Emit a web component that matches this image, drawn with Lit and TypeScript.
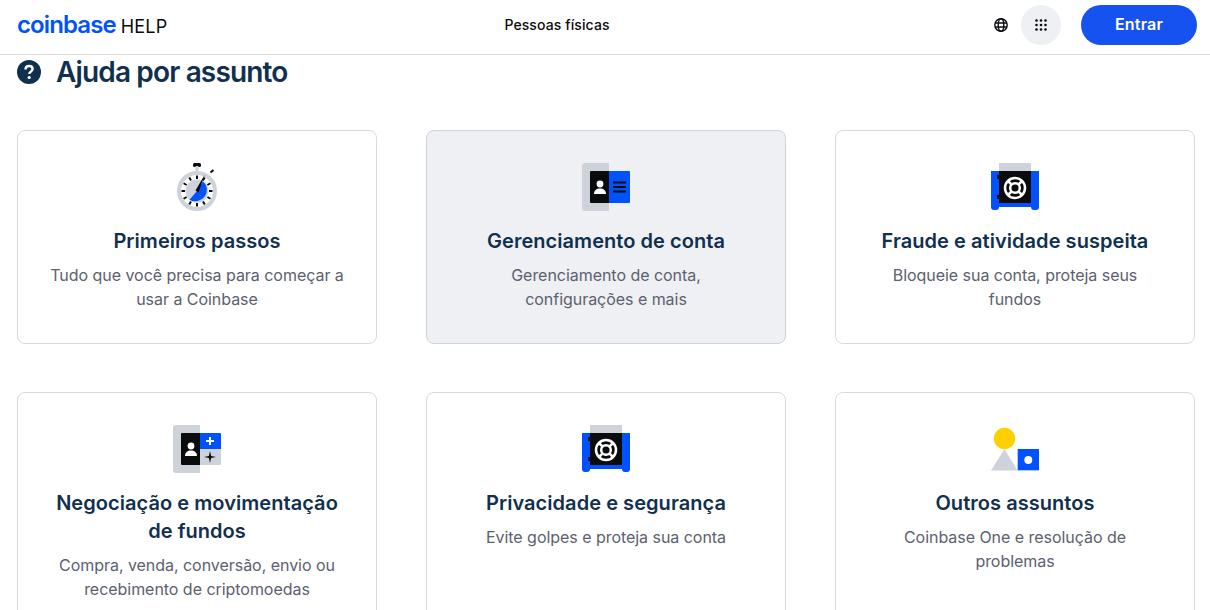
import { LitElement, html, css, svg } from "lit";
import { customElement } from "lit/decorators.js";

const idBase = svg`
  <path d="M3 0h24v48H3a3 3 0 0 1-3-3V3a3 3 0 0 1 3-3z" fill="#ced2db"/>
  <path d="M9 8h18v32H9a1 1 0 0 1-1-1V9a1 1 0 0 1 1-1z" fill="#0a0b0d"/>
  <circle cx="18" cy="21" r="3.4" fill="#fff"/>
  <path d="M12 31c0-3.5 2.6-5.4 6-5.4s6 1.900 6 5.400z" fill="#fff"/>`;

const ticks = Array.from({ length: 12 }, (_, i) => i * 30);

const icons = {
  stopwatch: svg`
    <rect x="20" y="0" width="8" height="4" rx="1.500" fill="#0a0b0d"/>
    <rect x="22.500" y="3" width="3" height="5" fill="#ced2db"/>
    <path d="M37.500 9.500l3 -2.500" stroke="#0a0b0d" stroke-width="2"/>
    <circle cx="24" cy="28" r="18" fill="#fff" stroke="#ced2db" stroke-width="4"/>
    <circle cx="24" cy="28" r="11.500" fill="#ced2db"/>
    <path d="M24 28L30 18.200A11.500 11.500 0 0 1 16.500 36.700z" fill="#0052ff"/>
    ${ticks.map(
      (a) => svg`<rect x="23" y="12.500" width="2" height="3.500" fill="#0a0b0d" transform="rotate(${a} 24 28)"/>`
    )}
    <path d="M22.500 27.500L31.800 11.500L25.500 29.500z" fill="#0a0b0d"/>`,
  account: svg`
    ${idBase}
    <path d="M27 8h20a1 1 0 0 1 1 1v30a1 1 0 0 1-1 1H27z" fill="#0052ff"/>
    <path d="M31 19.500h13M31 24h13M31 28.500h13" stroke="#0a0b0d" stroke-width="2"/>`,
  trade: svg`
    ${idBase}
    <path d="M27 8h20a1 1 0 0 1 1 1v15H27z" fill="#0052ff"/>
    <path d="M27 24h21v15a1 1 0 0 1-1 1H27z" fill="#ced2db"/>
    <path d="M33 16h8M37 12v8" stroke="#fff" stroke-width="2"/>
    <path d="M37 26l1.100 4.900 4.900 1.100-4.900 1.100-1.100 4.900-1.100-4.900-4.900-1.100 4.900-1.100z" fill="#0a0b0d"/>`,
  buoy: svg`
    <rect x="8" y="0" width="32" height="8" fill="#ced2db"/>
    <path d="M0 8h48v36a3 3 0 0 1-3 3h-2a3 3 0 0 1-3-3H8a3 3 0 0 1-3 3H3a3 3 0 0 1-3-3z" fill="#0052ff"/>
    <rect x="8" y="8" width="32" height="32" fill="#0a0b0d"/>
    <rect x="6" y="12" width="2" height="4" fill="#0a0b0d"/>
    <rect x="6" y="32" width="2" height="4" fill="#0a0b0d"/>
    <circle cx="24" cy="25" r="10" fill="none" stroke="#fff" stroke-width="2.500"/>
    <circle cx="24" cy="25" r="4.800" fill="none" stroke="#fff" stroke-width="2.500"/>
    <path d="M17 18l3.600 3.600M31 18l-3.600 3.600M17 32l3.600-3.600M31 32l-3.600-3.600" stroke="#fff" stroke-width="2.500"/>`,
  shapes: svg`
    <path d="M13.500 24L26.500 45.500H0z" fill="#ced2db"/>
    <circle cx="13.500" cy="13.500" r="10.700" fill="#ffd000"/>
    <rect x="26.700" y="24" width="21.300" height="21.300" fill="#0052ff"/>
    <circle cx="37.300" cy="35" r="4" fill="#fff"/>`,
};

const topics = [
  { icon: "stopwatch", title: "Primeiros passos", text: "Tudo que você precisa para começar a usar a Coinbase" },
  { icon: "account", title: "Gerenciamento de conta", text: "Gerenciamento de conta, configurações e mais", active: true },
  { icon: "buoy", title: "Fraude e atividade suspeita", text: "Bloqueie sua conta, proteja seus fundos" },
  { icon: "trade", title: "Negociação e movimentação de fundos", text: "Compra, venda, conversão, envio ou recebimento de criptomoedas" },
  { icon: "buoy", title: "Privacidade e segurança", text: "Evite golpes e proteja sua conta" },
  { icon: "shapes", title: "Outros assuntos", text: "Coinbase One e resolução de problemas" },
] as const;

@customElement("app-root")
export class AppRoot extends LitElement {
  static styles = css`
    :host {
      display: block;
      height: 610px;
      overflow: hidden;
      background: #fff;
      font-family: Inter, "Noto Sans", sans-serif;
    }
    .top {
      display: flex;
      align-items: center;
      height: 50px;
      padding: 0 13px 4px 17px;
      border-bottom: 1px solid #dcdcdc;
    }
    .brand {
      display: flex;
      align-items: baseline;
      gap: 5px;
      width: 400px;
      margin-top: -2px;
    }
    .logo {
      color: #0052ff;
      font-size: 24px;
      font-weight: 600;
      letter-spacing: -0.9px;
    }
    .help {
      color: #0a0b0d;
      font-size: 18px;
      letter-spacing: 0.2px;
    }
    .segment {
      width: 280px;
      margin-top: -2px;
      text-align: center;
      font-size: 14px;
      font-weight: 500;
      letter-spacing: 0.1px;
      color: #0a0b0d;
    }
    .actions {
      margin-left: auto;
      display: flex;
      align-items: center;
    }
    .globe {
      display: block;
      margin-right: 13px;
    }
    .apps {
      width: 40px;
      height: 40px;
      border-radius: 50%;
      background: #eef0f3;
      display: flex;
      align-items: center;
      justify-content: center;
      margin-right: 20px;
    }
    .enter {
      box-sizing: border-box;
      width: 116px;
      height: 40px;
      padding-bottom: 2px;
      border-radius: 20px;
      background: #1652f0;
      color: #fff;
      display: flex;
      align-items: center;
      justify-content: center;
      font-size: 16px;
      font-weight: 600;
      letter-spacing: 0.2px;
    }
    .heading {
      display: flex;
      align-items: center;
      gap: 15px;
      height: 36px;
      padding: 0 17px;
      margin-bottom: 40px;
      margin-top: -1px;
    }
    .heading svg {
      display: block;
      flex: none;
    }
    h1 {
      margin: 0;
      font-size: 28px;
      line-height: 36px;
      font-weight: 600;
      letter-spacing: -0.85px;
      color: #11304f;
    }
    .grid {
      display: grid;
      grid-template-columns: repeat(3, 360px);
      column-gap: 49px;
      row-gap: 48px;
      padding-left: 17px;
    }
    .card {
      box-sizing: border-box;
      min-height: 214px;
      padding: 32px 30px;
      border: 1px solid #d8dae0;
      border-radius: 8px;
      text-align: center;
      background: #fff;
    }
    .card.active {
      background: #eef0f3;
      border-color: #ced2db;
    }
    .card svg {
      display: block;
      margin: 0 auto 16px;
    }
    h2 {
      margin: 0 0 8px;
      font-size: 20px;
      line-height: 28px;
      font-weight: 600;
      letter-spacing: 0.05px;
      color: #11304f;
    }
    p {
      margin: 0;
      font-size: 16px;
      line-height: 24px;
      letter-spacing: -0.04px;
      color: #5b616e;
    }
  `;

  render() {
    return html`
      <header class="top">
        <div class="brand">
          <span class="logo">coinbase</span>
          <span class="help">HELP</span>
        </div>
        <div class="segment">Pessoas físicas</div>
        <div class="actions">
          <svg class="globe" width="14" height="14" viewBox="0 0 14 14" fill="none" stroke="#0a0b0d" stroke-width="1.400">
            <circle cx="7" cy="7" r="6.200" />
            <ellipse cx="7" cy="7" rx="2.800" ry="6.200" />
            <path d="M1 5h12M1 9h12" />
          </svg>
          <div class="apps">
            <svg width="12" height="12" viewBox="0 0 12 12" fill="#0a0b0d">
              ${[1.5, 6, 10.5].map((y) =>
                [1.5, 6, 10.5].map((x) => svg`<circle cx=${x} cy=${y} r="1.300" />`)
              )}
            </svg>
          </div>
          <div class="enter">Entrar</div>
        </div>
      </header>
      <div class="heading">
        <svg width="24" height="24" viewBox="0 0 24 24">
          <circle cx="12" cy="12" r="12" fill="#11304f" />
          <path d="M8.500 9.500c0-2.200 1.500-3.500 3.600-3.500s3.500 1.200 3.500 3c0 2.600-3.300 2.700-3.300 5" fill="none" stroke="#fff" stroke-width="2.400" />
          <circle cx="12.200" cy="17.500" r="1.600" fill="#fff" />
        </svg>
        <h1>Ajuda por assunto</h1>
      </div>
      <section class="grid">
        ${topics.map(
          (t) => html`
            <article class="card ${"active" in t ? "active" : ""}">
              <svg width="48" height="48" viewBox="0 0 48 48">${icons[t.icon]}</svg>
              <h2>${t.title}</h2>
              <p>${t.text}</p>
            </article>
          `
        )}
      </section>
    `;
  }
}
